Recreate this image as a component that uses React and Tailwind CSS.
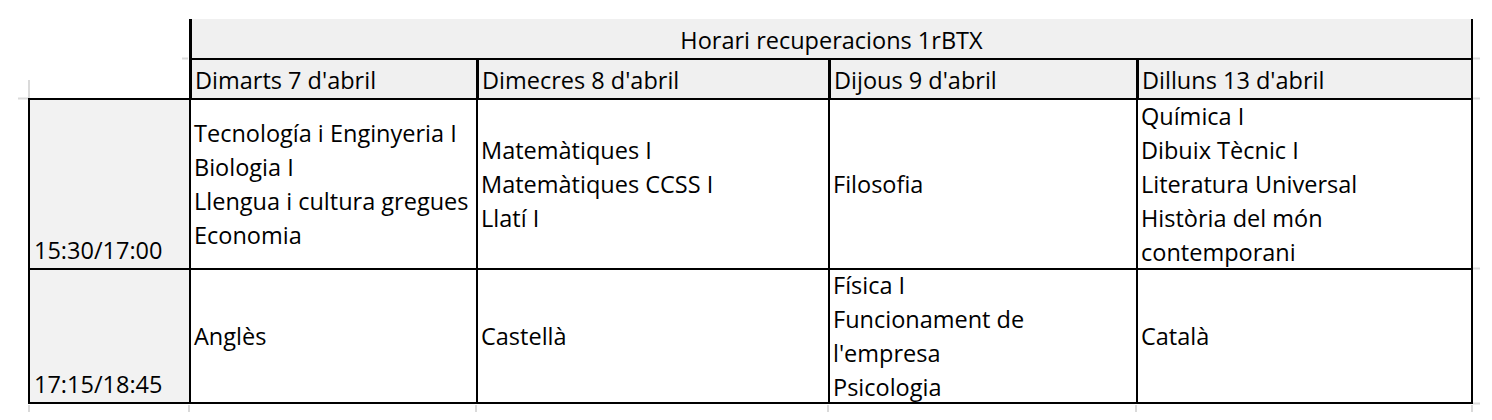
import React from 'react';

const days = ["Dimarts 7 d'abril", 'Dimecres 8 d\'abril', "Dijous 9 d'abril", "Dilluns 13 d'abril"];

const rows = [
  {
    time: '15:30/17:00',
    cells: [
      ['Tecnología i Enginyeria I', 'Biologia I', 'Llengua i cultura gregues', 'Economia'],
      ['Matemàtiques I', 'Matemàtiques CCSS I', 'Llatí I'],
      ['Filosofia'],
      ['Química I', 'Dibuix Tècnic I', 'Literatura Universal', 'Història del món', 'contemporani'],
    ],
  },
  {
    time: '17:15/18:45',
    cells: [
      ['Anglès'],
      ['Castellà'],
      ['Física I', 'Funcionament de', "l'empresa", 'Psicologia'],
      ['Català'],
    ],
  },
];

function Stubs() {
  // faint spreadsheet gridlines peeking out past the bordered table
  const c = '#dadada';
  return (
    <svg className="absolute inset-0 pointer-events-none" width="1492" height="420">
      <line x1="182" y1="58.5" x2="188" y2="58.5" stroke={c} strokeWidth="2" />
      <line x1="18" y1="98.5" x2="28" y2="98.5" stroke={c} strokeWidth="2" />
      <line x1="29" y1="80" x2="29" y2="98" stroke={c} strokeWidth="2" />
      {[58.5, 98.5, 268.5, 403.5].map((y) => (
        <line key={y} x1="1473" y1={y} x2="1480" y2={y} stroke={c} strokeWidth="2" />
      ))}
      {[29, 189, 476, 828, 1136, 1472].map((x) => (
        <line key={x} x1={x} y1="405" x2={x} y2="412" stroke={c} strokeWidth="2" />
      ))}
    </svg>
  );
}

export default function App() {
  return (
    <div
      className="relative w-[1492px] h-[420px] bg-white overflow-hidden text-black text-[23.5px] leading-[34px]"
      style={{ fontFamily: '"Open Sans", "Liberation Sans", sans-serif' }}
    >
      <Stubs />
      <div className="pl-[28px] pt-[19px] grid grid-cols-[161px_287px_352px_308px_337px] grid-rows-[39px_40px_170px_136px]">
        <div className="row-span-2" />
        <div className="col-span-4 bg-[#f0f0f0] border-l-[3px] border-r-2 border-black flex items-end justify-center pb-[1px]">
          <span>Horari recuperacions 1rBTX</span>
        </div>

        {days.map((d, i) => (
          <div
            key={d}
            className={`bg-[#f0f0f0] border-t-2 border-l-[3px] border-black flex items-end pl-[3px] pb-[1px] whitespace-nowrap ${i === 3 ? 'border-r-2' : ''}`}
          >
            {d}
          </div>
        ))}

        {rows.map((r, ri) => (
          <React.Fragment key={r.time}>
            <div
              className={`bg-[#f2f2f2] border-t-2 border-l-2 border-black flex items-end pl-[4px] pb-[1px] ${ri === 1 ? 'border-b-2' : ''}`}
            >
              {r.time}
            </div>
            {r.cells.map((lines, ci) => (
              <div
                key={ci}
                className={`border-t-2 border-l-2 border-black flex flex-col justify-center pl-[3px] whitespace-nowrap ${ci === 3 ? 'border-r-2' : ''} ${ri === 1 ? 'border-b-2' : ''}`}
              >
                {lines.map((l) => (
                  <div key={l}>{l}</div>
                ))}
              </div>
            ))}
          </React.Fragment>
        ))}
      </div>
    </div>
  );
}
